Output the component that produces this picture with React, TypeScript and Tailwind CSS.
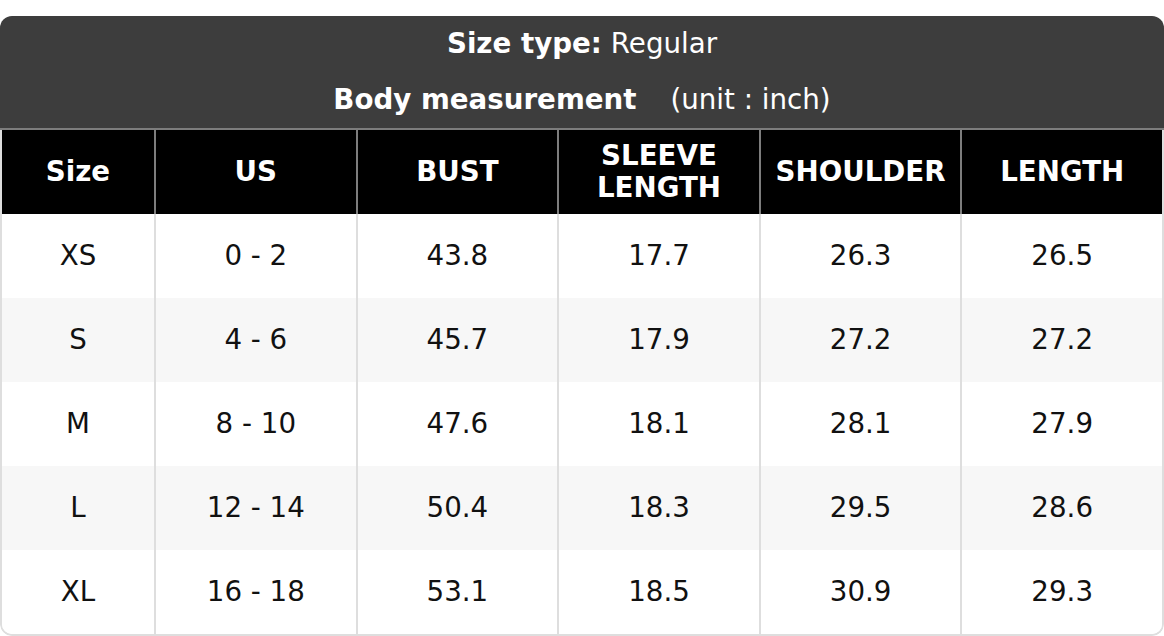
import React from 'react';

const HEADERS = ['Size', 'US', 'BUST', 'SLEEVE\nLENGTH', 'SHOULDER', 'LENGTH'];

const ROWS = [
  ['XS', '0 - 2', '43.8', '17.7', '26.3', '26.5'],
  ['S', '4 - 6', '45.7', '17.9', '27.2', '27.2'],
  ['M', '8 - 10', '47.6', '18.1', '28.1', '27.9'],
  ['L', '12 - 14', '50.4', '18.3', '29.5', '28.6'],
  ['XL', '16 - 18', '53.1', '18.5', '30.9', '29.3'],
];

export default function App() {
  return (
    <div className="w-[1164px] h-[636px] bg-white pt-[16px] font-['DejaVu_Sans',sans-serif]">
      <div className="w-[1164px] rounded-[12px] overflow-hidden">
        {/* title block */}
        <div className="bg-[#3d3d3d] text-white text-[27.7px] border-b-2 border-[#7d7d7d]">
          <div className="h-[56px] flex items-center justify-center">
            <span className="font-bold">Size type:</span>
            <span className="ml-[9px]">Regular</span>
          </div>
          <div className="h-[56px] flex items-center justify-center">
            <span className="font-bold">Body measurement</span>
            <span className="ml-[34px]">(unit : inch)</span>
          </div>
        </div>

        <div className="border-x-2 border-b-2 border-[#dedede] rounded-b-[12px] overflow-hidden">
          <div className="grid grid-cols-[152px_repeat(5,1fr)] bg-black text-white text-[27.7px] font-bold">
            {HEADERS.map((h, i) => (
              <div
                key={h}
                className={`h-[84px] flex items-center justify-center text-center whitespace-pre leading-[32px] ${i > 0 ? 'border-l-2 border-[#7d7d7d]' : ''}`}
              >
                {h}
              </div>
            ))}
          </div>

          {ROWS.map((row, r) => (
            <div
              key={row[0]}
              className={`grid grid-cols-[152px_repeat(5,1fr)] text-[27.7px] text-[#111] ${r % 2 === 1 ? 'bg-[#f7f7f7]' : 'bg-white'}`}
            >
              {row.map((cell, i) => (
                <div
                  key={i}
                  className={`h-[84px] flex items-center justify-center ${i > 0 ? 'border-l-2 border-[#dedede]' : ''}`}
                >
                  {cell}
                </div>
              ))}
            </div>
          ))}
        </div>
      </div>
    </div>
  );
}
